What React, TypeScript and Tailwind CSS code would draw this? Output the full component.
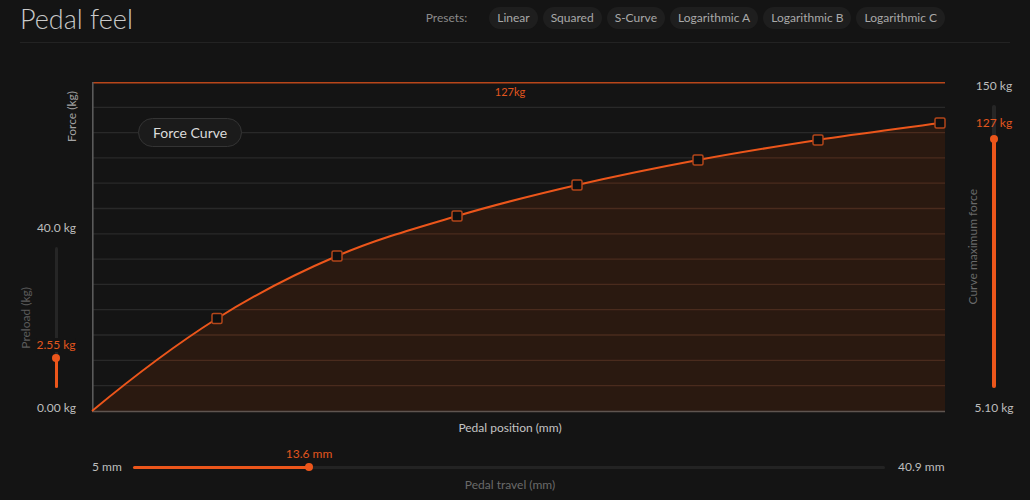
const PRESETS = ["Linear", "Squared", "S-Curve", "Logarithmic A", "Logarithmic B", "Logarithmic C"];

// chart-local control points (plot is 853 x 329)
const POINTS: [number, number][] = [
  [0, 329],
  [125, 236.5],
  [245, 174],
  [365, 134],
  [485, 103],
  [606, 78],
  [726, 58],
  [848, 41],
];

const GRID = Array.from({ length: 12 }, (_, i) => Math.round((i + 1) * 25.3 * 10) / 10);

function curvePath(pts: [number, number][]) {
  const all: [number, number][] = [[-125, 444], ...pts, [970, 24]];
  let d = `M${pts[0][0]},${pts[0][1]}`;
  for (let i = 1; i < all.length - 2; i++) {
    const [x0, y0] = all[i - 1];
    const [x1, y1] = all[i];
    const [x2, y2] = all[i + 1];
    const [x3, y3] = all[i + 2];
    const c1x = x1 + (x2 - x0) / 6;
    const c1y = y1 + (y2 - y0) / 6;
    const c2x = x2 - (x3 - x1) / 6;
    const c2y = y2 - (y3 - y1) / 6;
    d += ` C${c1x.toFixed(1)},${c1y.toFixed(1)} ${c2x.toFixed(1)},${c2y.toFixed(1)} ${x2},${y2}`;
  }
  return d;
}

function ForceChart() {
  const line = curvePath(POINTS);
  const area = `${line} L853,40.3 L853,329 L0,329 Z`;
  return (
    <svg width={853} height={331} className="block overflow-visible">
      <defs>
        <clipPath id="under-curve">
          <path d={area} />
        </clipPath>
      </defs>
      {GRID.map((y) => (
        <line key={y} x1={0} x2={853} y1={y} y2={y} stroke="#292929" strokeWidth={1.3} />
      ))}
      <path d={area} fill="#2a1910" />
      <g clipPath="url(#under-curve)">
        {GRID.map((y) => (
          <line key={y} x1={0} x2={853} y1={y} y2={y} stroke="#4a2b1d" strokeWidth={1.3} />
        ))}
      </g>
      <line x1={0} x2={853} y1={0.8} y2={0.8} stroke="#b8461a" strokeWidth={1.6} />
      <line x1={0} x2={853} y1={329.5} y2={329.5} stroke="#5f5550" strokeWidth={1.6} />
      <line x1={0.8} x2={0.8} y1={0} y2={330} stroke="#5a5a5a" strokeWidth={1.6} />
      <path d={line} fill="none" stroke="#ec561b" strokeWidth={2} />
      {POINTS.slice(1).map(([x, y]) => (
        <rect key={x} x={x - 5} y={y - 5} width={10} height={10} rx={1.5} fill="#0f0f0f" stroke="#b3461a" strokeWidth={1.5} />
      ))}
    </svg>
  );
}

export default function App() {
  return (
    <div className="h-[500px] w-[1030px] overflow-hidden bg-[#141414] px-5 font-['Lato','Liberation_Sans',sans-serif]">
      <header className="flex h-[43px] items-center justify-between border-b border-[#232323] pb-[6px]">
        <h1 className="text-[27px] font-light leading-none text-[#c9c9c9]">Pedal feel</h1>
        <div className="mr-[65px] flex items-center">
          <span className="mr-[22px] text-[12px] text-[#8a8a8a]">Presets:</span>
          <div className="flex gap-[5px]">
            {PRESETS.map((p) => (
              <span key={p} className="flex h-[22px] items-center rounded-full bg-[#1e1e1e] px-[8px] text-[12px] text-[#a9a9a9]">
                {p}
              </span>
            ))}
          </div>
        </div>
      </header>

      <main className="flex pt-[39px] text-[12px] leading-[14px]">
        {/* left axis + preload slider */}
        <aside className="flex w-[72px] shrink-0 flex-col">
          <div className="flex h-[69px] items-center justify-end pr-[14px]">
            <span className="rotate-180 leading-[12px] text-[#a3a3a3] [writing-mode:vertical-rl]">Force (kg)</span>
          </div>
          <div className="mt-[70px] pr-[16px] text-right text-[#bdbdbd]">40.0 kg</div>
          <div className="flex h-[166px]">
            <div className="flex w-[12px] items-center justify-center">
              <span className="rotate-180 leading-[12px] text-[#5c5c5c] [writing-mode:vertical-rl]">Preload (kg)</span>
            </div>
            <div className="flex w-[48px] flex-col items-center">
              <div className="relative mt-[12px] h-[141px] w-[3px] rounded-full bg-[#262626]">
                <div className="absolute inset-x-0 bottom-0 h-[30px] rounded-full bg-[#ec561b]" />
                <div className="absolute left-1/2 top-[107px] size-[8px] -translate-x-1/2 rounded-full bg-[#ec561b]" />
                <span className="absolute left-1/2 top-[91px] -translate-x-1/2 whitespace-nowrap bg-[#141414] text-[#e2561e]">2.55 kg</span>
              </div>
            </div>
          </div>
          <div className="pr-[16px] text-right text-[#bdbdbd]">0.00 kg</div>
        </aside>

        {/* chart */}
        <section className="flex w-[853px] shrink-0 flex-col">
          <div className="relative h-[330px]">
            <ForceChart />
            <div className="absolute left-[46px] top-[36px] flex h-[29px] items-center rounded-full border border-[#343434] bg-[#1b1b1b] px-[14px] text-[14px] text-[#dcdcdc]">
              Force Curve
            </div>
            <div className="absolute inset-x-0 top-[3px] pr-[17px] text-center text-[11px] text-[#e2561e]">127kg</div>
          </div>
          <div className="mt-[9px] pr-[17px] text-center text-[#c4c4c4]">Pedal position (mm)</div>
          <div className="mt-[25px] flex h-[14px] items-center">
            <span className="w-[41px] text-[#bdbdbd]">5 mm</span>
            <div className="relative h-[3px] flex-1 rounded-full bg-[#232323]">
              <div className="absolute inset-y-0 left-0 w-[176px] rounded-full bg-[#ec561b]" />
              <div className="absolute left-[176px] top-1/2 size-[8px] -translate-x-1/2 -translate-y-1/2 rounded-full bg-[#ec561b]" />
              <span className="absolute bottom-[8px] left-[176px] -translate-x-1/2 whitespace-nowrap text-[#e2561e]">13.6 mm</span>
            </div>
            <span className="w-[60px] pl-[13px] text-[#bdbdbd]">40.9 mm</span>
          </div>
          <div className="mt-[4px] pr-[17px] text-center text-[#6a6a6a]">Pedal travel (mm)</div>
        </section>

        {/* right: curve maximum force slider */}
        <aside className="flex flex-1 pl-[22px]">
          <div className="flex h-[329px] w-[12px] items-center justify-center">
            <span className="rotate-180 leading-[12px] text-[#6a6a6a] [writing-mode:vertical-rl]">Curve maximum force</span>
          </div>
          <div className="flex w-[30px] flex-col items-center">
            <span className="-mt-[3px] whitespace-nowrap text-[#bdbdbd]">150 kg</span>
            <div className="relative mt-[12px] h-[283px] w-[4px] rounded-full bg-[#262626]">
              <div className="absolute inset-x-0 bottom-0 h-[249px] rounded-full bg-[#ec561b]" />
              <div className="absolute left-1/2 top-[30px] size-[8px] -translate-x-1/2 rounded-full bg-[#ec561b]" />
              <span className="absolute left-1/2 top-[11px] -translate-x-1/2 whitespace-nowrap text-[#e2561e]">127 kg</span>
            </div>
            <span className="mt-[13px] whitespace-nowrap text-[#bdbdbd]">5.10 kg</span>
          </div>
        </aside>
      </main>
    </div>
  );
}
